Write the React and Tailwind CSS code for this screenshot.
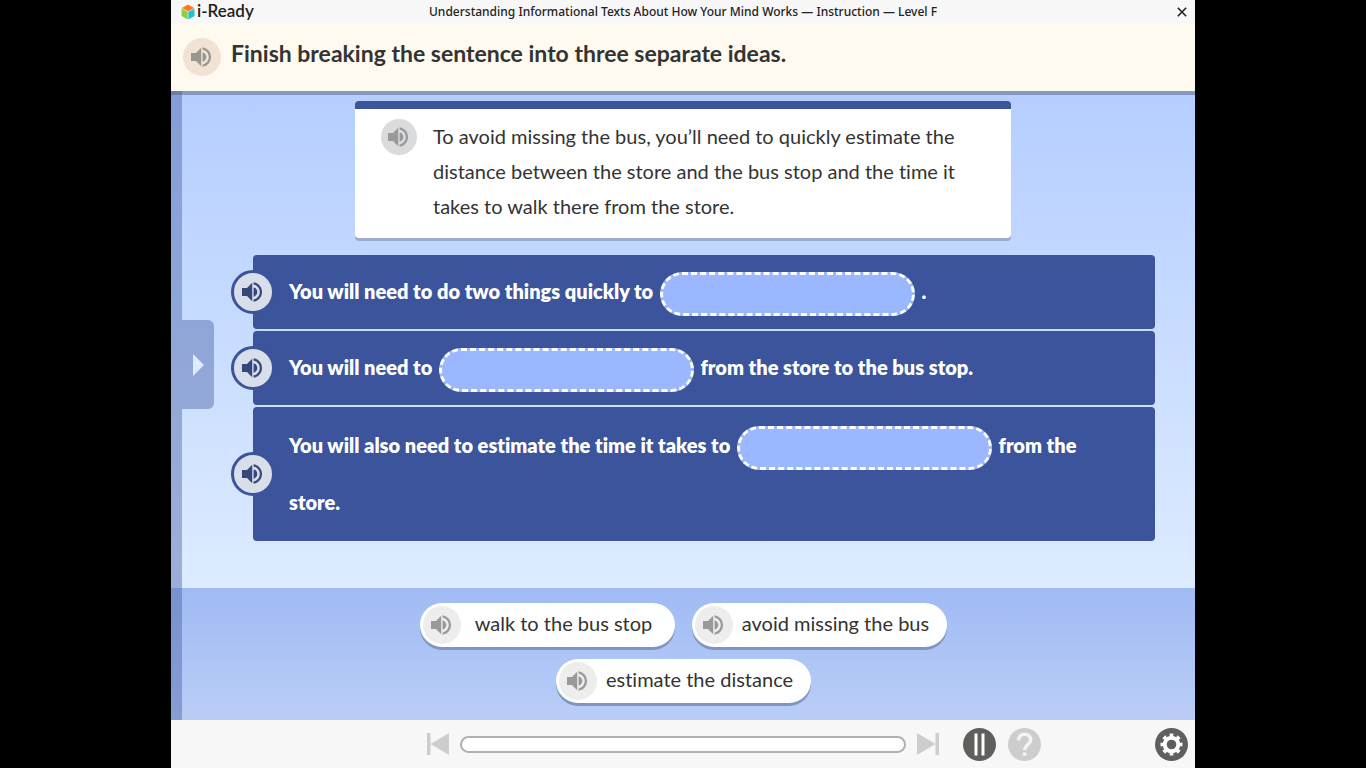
import React from "react";

function Speaker({ className }) {
  return (
    <svg viewBox="0 0 20 20" className={className} fill="currentColor" aria-hidden="true">
      <path d="M0 6h5l5.2-5.2v18.4L5 14H0z" />
      <path d="M11.6 5.2c2.2.8 3.7 2.6 3.7 4.8s-1.500 4-3.7 4.800z" />
      <path d="M11.600 .2C16.500 1 20 5 20 10s-3.500 9-8.400 9.800v-2.200c3.600-.9 6.200-3.900 6.200-7.600s-2.600-6.700-6.200-7.600z" />
    </svg>
  );
}

function AudioButton({ label, className, iconClass = "size-5" }) {
  return (
    <button
      type="button"
      aria-label={label}
      className={"flex shrink-0 items-center justify-center rounded-full pr-0.5 " + className}
    >
      <Speaker className={iconClass} />
    </button>
  );
}

function Logo() {
  return (
    <a href="#home" aria-label="i-Ready" className="flex items-center gap-0.5 text-[#222]">
      <svg viewBox="0 0 14 16" className="h-4 w-3.5" aria-hidden="true">
        <path d="M7 .4 13.200 3.900 7 7.500 .8 3.900z" fill="#ff7a1a" />
        <path d="M.5 4.400 6.700 8v7.500L.5 11.900z" fill="#8bd13f" />
        <path d="M13.500 4.400 7.300 8v7.500l6.200-3.600z" fill="#1fc0d8" />
      </svg>
      <span className="pb-0.5 font-['Lato',sans-serif] text-[17px] leading-5 font-semibold">i-Ready</span>
    </a>
  );
}

function Blank({ label }) {
  return (
    <button
      type="button"
      aria-label={label}
      className="mx-0.5 inline-block h-11 w-[255px] rounded-full border-3 border-dashed border-white bg-[#9bb7ff] align-middle"
    />
  );
}

function Idea({ children, className = "" }) {
  return (
    <li className={"relative rounded bg-[#3b549b] px-9 " + className}>
      <div className="absolute inset-y-0 -left-[22px] flex items-center">
        <AudioButton
          label="Listen to this idea"
          className="size-[44px] border-[3px] border-[#3b549b] bg-[#d9deeb] text-[#364879]"
        />
      </div>
      <p className="text-[20px] leading-[57px] font-extrabold text-white">{children}</p>
    </li>
  );
}

function Choice({ children }) {
  return (
    <li className="flex h-11 w-[255px] items-center rounded-full bg-white pl-[3px] shadow-[0_3px_0_#8096bf]">
      <AudioButton label={"Listen: " + children} className="size-[38px] bg-[#ededed] text-[#999]" />
      <button type="button" className="flex-1 pr-2 pb-1 text-center text-[20px] leading-6 whitespace-nowrap">
        {children}
      </button>
    </li>
  );
}

export default function App() {
  return (
    <div className="min-h-screen bg-black font-['Lato',sans-serif] text-[#333] [font-variant-ligatures:none]">
      <div className="mx-auto flex min-h-screen max-w-[1024px] flex-col">
        <header className="grid h-[23px] grid-cols-[1fr_auto_1fr] items-center bg-[#f7f7f7] px-2.5">
          <Logo />
          <h1 className="font-['Noto_Sans',sans-serif] text-[12px] leading-4 font-medium text-[#222]">
            Understanding Informational Texts About How Your Mind Works — Instruction — Level F
          </h1>
          <button type="button" aria-label="Close" className="-mr-1.5 justify-self-end p-1 text-[#222]">
            <svg viewBox="0 0 10 10" className="size-2.5" stroke="currentColor" strokeWidth="1.6" aria-hidden="true">
              <path d="M.8.8l8.400 8.400M9.200.8L.8 9.200" />
            </svg>
          </button>
        </header>

        <section className="flex h-[68px] items-center gap-2.5 bg-[#fffaef] px-3">
          <AudioButton label="Listen to the directions" className="size-[38px] bg-[#f0e3d3] text-[#999690]" />
          <h2 className="pb-2 text-[23px] leading-8 font-bold">
            Finish breaking the sentence into three separate ideas.
          </h2>
        </section>

        <div className="relative flex flex-1 flex-col border-t-4 border-[#8798c0]">
          <main className="flex flex-1 flex-col items-center bg-linear-to-b from-[#b5ceff] to-[#ddebff] px-10 pt-1.5">
            <article className="w-full max-w-[656px] rounded border-t-8 border-[#3b549b] bg-white pt-2.5 pr-6 pb-3.5 pl-[26px] shadow-[0_3px_0_#9aabcb]">
              <div className="flex items-start gap-4">
                <AudioButton label="Listen to the sentence" className="size-9 bg-[#dadbdc] text-[#999]" />
                <p className="text-[20px] leading-[35px]">
                  To avoid missing the bus, you’ll need to quickly estimate the distance between the
                  store and the bus stop and the time it takes to walk there from the store.
                </p>
              </div>
            </article>
            <ul className="mt-[17px] flex w-full flex-col gap-0.5 pl-[42px]">
              <Idea className="pt-2 pb-[9px]">
                You will need to do two things quickly to <Blank label="First idea" /> .
              </Idea>
              <Idea className="pt-2 pb-[9px]">
                You will need to <Blank label="Second idea" /> from the store to the bus stop.
              </Idea>
              <Idea className="py-2.5">
                You will also need to estimate the time it takes to <Blank label="Third idea" /> from the store.
              </Idea>
            </ul>
          </main>
          <section aria-label="Choices" className="bg-linear-to-b from-[#9fbbf4] to-[#bacdf6] px-60 pt-[15px] pb-[17px]">
            <ul className="flex flex-wrap justify-center gap-x-[17px] gap-y-3">
              <Choice>walk to the bus stop</Choice>
              <Choice>avoid missing the bus</Choice>
              <Choice>estimate the distance</Choice>
            </ul>
          </section>
          <div className="absolute -top-1 bottom-0 left-0 flex items-center">
            <div className="h-full w-[11px] bg-[#3b549b]/40" />
            <button
              type="button"
              aria-label="Open side panel"
              className="mb-[82px] flex h-[89px] w-8 items-center justify-center rounded-r-md bg-[#3b549b]/40"
            >
              <svg viewBox="0 0 11 22" className="h-[22px] w-[11px]" fill="#e0eaff" aria-hidden="true">
                <path d="M0 0l11 11L0 22z" />
              </svg>
            </button>
          </div>
        </div>

        <footer className="grid h-12 grid-cols-[1fr_auto_1fr] items-center bg-[#f7f7f7] px-[7px]">
          <span />
          <div className="flex items-center gap-[11px]">
            <button type="button" aria-label="Previous">
              <svg viewBox="0 0 22 22" className="size-[22px]" fill="#cdcdcd" aria-hidden="true">
                <path d="M0 0h3.500v22H0zM22 0v22L3.500 11z" />
              </svg>
            </button>
            <div
              role="progressbar"
              aria-label="Lesson progress"
              aria-valuenow={0}
              className="h-[17px] w-[446px] rounded-full border-2 border-[#b0b0b0] bg-white"
            />
            <button type="button" aria-label="Next">
              <svg viewBox="0 0 22 22" className="size-[22px]" fill="#cdcdcd" aria-hidden="true">
                <path d="M18.500 0H22v22h-3.500zM0 0v22l18.500-11z" />
              </svg>
            </button>
          </div>
          <div className="flex items-center gap-3 pl-6">
            <button type="button" aria-label="Pause">
              <svg viewBox="0 0 33 33" className="size-[33px]" aria-hidden="true">
                <circle cx="16.500" cy="16.500" r="16.500" fill="#5e605d" />
                <path d="M11.500 5.500h3v22h-3zM18.500 5.500h3v22h-3z" fill="#fff" />
              </svg>
            </button>
            <button type="button" aria-label="Help">
              <svg viewBox="0 0 33 33" className="size-[33px]" aria-hidden="true">
                <circle cx="16.500" cy="16.500" r="16.500" fill="#cdcdcd" />
                <path
                  d="M10.500 12.500c0-3.900 2.500-6.200 6-6.200s6.200 2.300 6.200 5.500c0 4.700-6 4.900-6 10.400"
                  fill="none"
                  stroke="#f4f4f4"
                  strokeWidth="3.400"
                />
                <path d="M14.800 24.500h3.800v3.200h-3.800z" fill="#f4f4f4" />
              </svg>
            </button>
            <button type="button" aria-label="Settings" className="ml-auto">
              <svg viewBox="0 0 33 33" className="size-[33px]" aria-hidden="true">
                <circle cx="16.500" cy="16.500" r="16.500" fill="#5e605d" />
                <circle cx="16.500" cy="16.500" r="6.800" fill="none" stroke="#fff" strokeWidth="4" />
                <circle
                  cx="16.500"
                  cy="16.500"
                  r="9.500"
                  fill="none"
                  stroke="#fff"
                  strokeWidth="3"
                  pathLength="160"
                  strokeDasharray="10 10"
                  strokeDashoffset="5"
                />
              </svg>
            </button>
          </div>
        </footer>
      </div>
    </div>
  );
}
